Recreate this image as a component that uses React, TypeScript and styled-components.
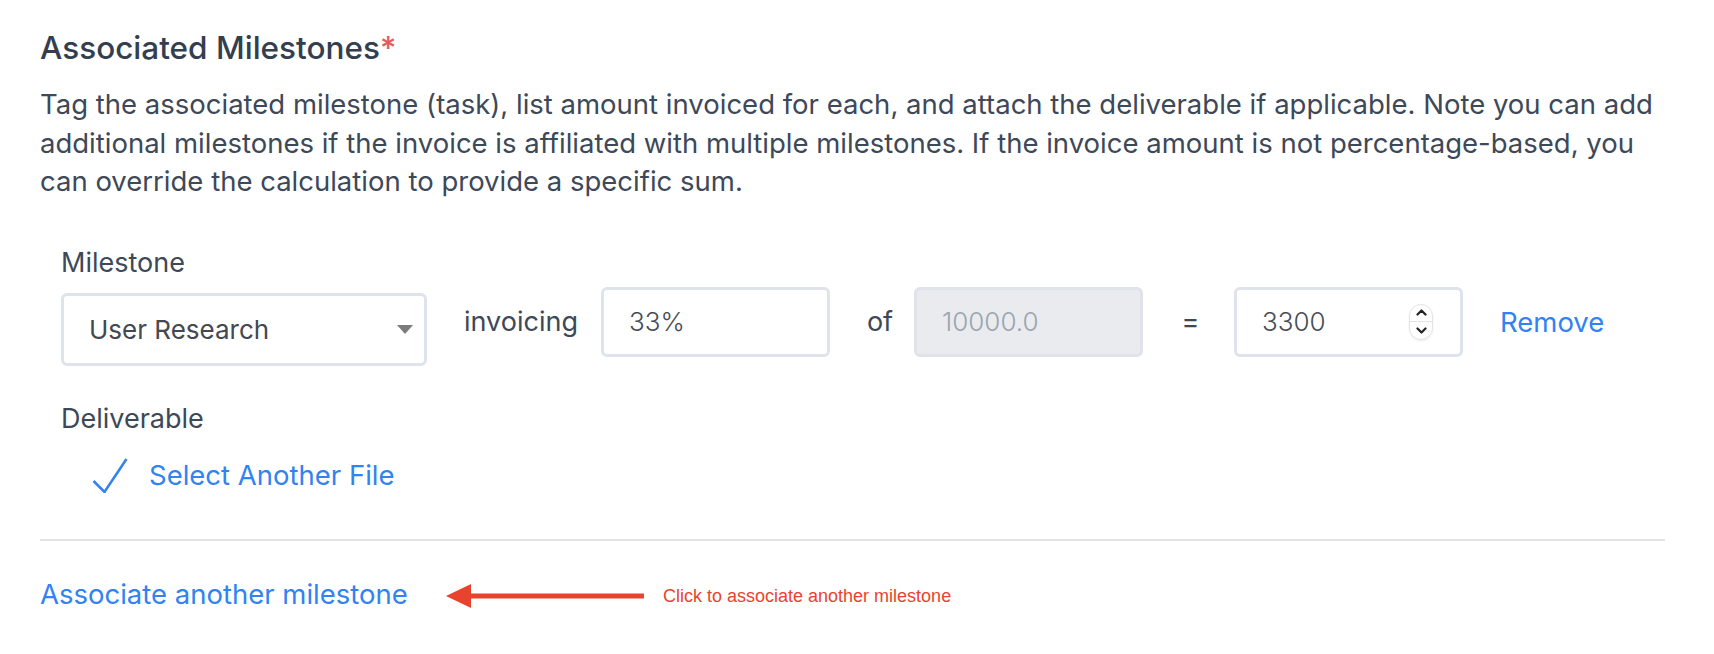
import React from 'react';
import styled, { createGlobalStyle } from 'styled-components';

const GlobalStyle = createGlobalStyle`
  body {
    margin: 0;
    background: #ffffff;
    font-family: Inter, 'Noto Sans', sans-serif;
    color: #394455;
  }
`;

const Page = styled.div`
  padding: 30px 49px 40px 40px;
`;

const Title = styled.h2`
  margin: 0;
  font-size: 31.5px;
  line-height: 36px;
  font-weight: 500;
  color: #333e4f;
`;

const Required = styled.span`
  color: #e25c5c;
`;

const Description = styled.p`
  margin: 19px 0 0;
  font-size: 27.5px;
  line-height: 38.5px;
  color: #3d4858;
`;

const Block = styled.div`
  padding-left: 21px;
  margin-top: 46px;
`;

const Label = styled.div<{ $top?: number }>`
  margin-top: ${({ $top }) => $top ?? 0}px;
  font-size: 27px;
  line-height: 32px;
  color: #3d4858;
`;

const MilestoneRow = styled.div`
  display: flex;
  align-items: flex-end;
`;

const Field = styled.div`
  display: flex;
  flex-direction: column;
`;

const SelectBox = styled.div`
  margin-top: 14px;
  width: 366px;
  height: 73px;
  box-sizing: border-box;
  border: 3px solid #dfe3eb;
  border-radius: 6px;
  display: flex;
  align-items: center;
  justify-content: space-between;
  padding: 0 11px 0 25px;
  font-size: 26px;
  color: #44484f;
`;

const Controls = styled.div`
  display: flex;
  align-items: center;
  height: 70px;
  margin-bottom: 9px;
`;

const Connector = styled.span<{ $width: number; $shift: number }>`
  width: ${({ $width }) => $width}px;
  padding-left: ${({ $shift }) => $shift}px;
  box-sizing: border-box;
  text-align: center;
  font-size: 27px;
  color: #3d4858;
`;

const Input = styled.input`
  width: 229px;
  height: 70px;
  box-sizing: border-box;
  border: 3px solid #dfe3eb;
  border-radius: 6px;
  padding: 0 0 0 25px;
  font-family: inherit;
  font-size: 26px;
  font-weight: 300;
  color: #474c55;
  background: #ffffff;
  outline: none;

  &:disabled {
    background: #e9ebef;
    color: #9ba4b0;
  }
`;

const NumberBox = styled.div`
  width: 229px;
  height: 70px;
  box-sizing: border-box;
  border: 3px solid #dfe3eb;
  border-radius: 6px;
  display: flex;
  align-items: center;
  padding: 0 27px 0 25px;
`;

const NumberInput = styled.input`
  flex: 1;
  min-width: 0;
  border: none;
  padding: 0;
  font-family: inherit;
  font-size: 26px;
  font-weight: 300;
  color: #474c55;
  outline: none;
  -moz-appearance: textfield;

  &::-webkit-inner-spin-button,
  &::-webkit-outer-spin-button {
    -webkit-appearance: none;
    margin: 0;
  }
`;

const Spinner = styled.div`
  width: 24px;
  height: 36px;
  box-sizing: border-box;
  border: 1px solid #e3e3e3;
  border-radius: 12px;
  box-shadow: 0 1px 2px rgba(0, 0, 0, 0.08);
  display: flex;
  flex-direction: column;
  overflow: hidden;
`;

const SpinHalf = styled.div<{ $divider?: boolean }>`
  flex: 1;
  display: flex;
  align-items: center;
  justify-content: center;
  border-top: ${({ $divider }) => ($divider ? '1px solid #e3e3e3' : 'none')};
`;

const LinkButton = styled.a`
  font-size: 27.5px;
  line-height: 32px;
  color: #3083f0;
  text-decoration: none;
  cursor: pointer;
`;

const RemoveLink = styled(LinkButton)`
  margin-left: 37px;
`;

const FileRow = styled.div`
  margin-top: 23px;
  padding-left: 31px;
  display: flex;
  align-items: center;
  gap: 21px;
`;

const Divider = styled.hr`
  margin: 46px 0 0;
  border: none;
  height: 2px;
  background: #e5e5e5;
`;

const Footer = styled.div`
  position: relative;
  margin-top: 37px;
  height: 32px;
`;

const Annotation = styled.div`
  position: absolute;
  left: 406px;
  top: 6px;
  display: flex;
  align-items: center;
  gap: 19px;
`;

const AnnotationText = styled.span`
  font-family: 'Liberation Sans', Arial, sans-serif;
  font-size: 18px;
  line-height: 22px;
  color: #e8432e;
`;

const Caret = () => (
  <svg width="16" height="9" viewBox="0 0 16 9">
    <path d="M0 0 H16 L8 9 Z" fill="#7b7b7b" />
  </svg>
);

const Chevron = ({ up }: { up?: boolean }) => (
  <svg width="11" height="7" viewBox="0 0 11 7">
    <path
      d={up ? 'M1.5 5.5 L5.5 1.5 L9.5 5.5' : 'M1.5 1.5 L5.5 5.5 L9.5 1.5'}
      fill="none"
      stroke="#222222"
      strokeWidth="2.2"
      strokeLinecap="round"
      strokeLinejoin="round"
    />
  </svg>
);

const CheckIcon = () => (
  <svg width="36" height="35" viewBox="0 0 36 35">
    <path
      d="M1.5 23 L12.5 34 L34.5 1"
      fill="none"
      stroke="#3083f0"
      strokeWidth="2.5"
    />
  </svg>
);

const Arrow = () => (
  <svg width="198" height="24" viewBox="0 0 198 24">
    <path d="M0 12 L25 0 L25 24 Z" fill="#e8432e" />
    <rect x="24" y="9.5" width="174" height="5" fill="#e8432e" />
  </svg>
);

const App = () => {
  return (
    <Page>
      <GlobalStyle />
      <Title>
        Associated Milestones<Required>*</Required>
      </Title>
      <Description>
        Tag the associated milestone (task), list amount invoiced for each, and attach the
        deliverable if applicable. Note you can add additional milestones if the invoice is
        affiliated with multiple milestones. If the invoice amount is not percentage-based, you
        can override the calculation to provide a specific sum.
      </Description>

      <Block>
        <MilestoneRow>
          <Field>
            <Label>Milestone</Label>
            <SelectBox>
              <span>User Research</span>
              <Caret />
            </SelectBox>
          </Field>
          <Controls>
            <Connector $width={174} $shift={14}>invoicing</Connector>
            <Input defaultValue="33%" />
            <Connector $width={84} $shift={16}>of</Connector>
            <Input disabled defaultValue="10000.0" />
            <Connector $width={91} $shift={4}>=</Connector>
            <NumberBox>
              <NumberInput type="number" defaultValue={3300} />
              <Spinner>
                <SpinHalf>
                  <Chevron up />
                </SpinHalf>
                <SpinHalf $divider>
                  <Chevron />
                </SpinHalf>
              </Spinner>
            </NumberBox>
            <RemoveLink>Remove</RemoveLink>
          </Controls>
        </MilestoneRow>

        <Label $top={37}>Deliverable</Label>
        <FileRow>
          <CheckIcon />
          <LinkButton>Select Another File</LinkButton>
        </FileRow>
      </Block>

      <Divider />

      <Footer>
        <LinkButton>Associate another milestone</LinkButton>
        <Annotation>
          <Arrow />
          <AnnotationText>Click to associate another milestone</AnnotationText>
        </Annotation>
      </Footer>
    </Page>
  );
};

export default App;
